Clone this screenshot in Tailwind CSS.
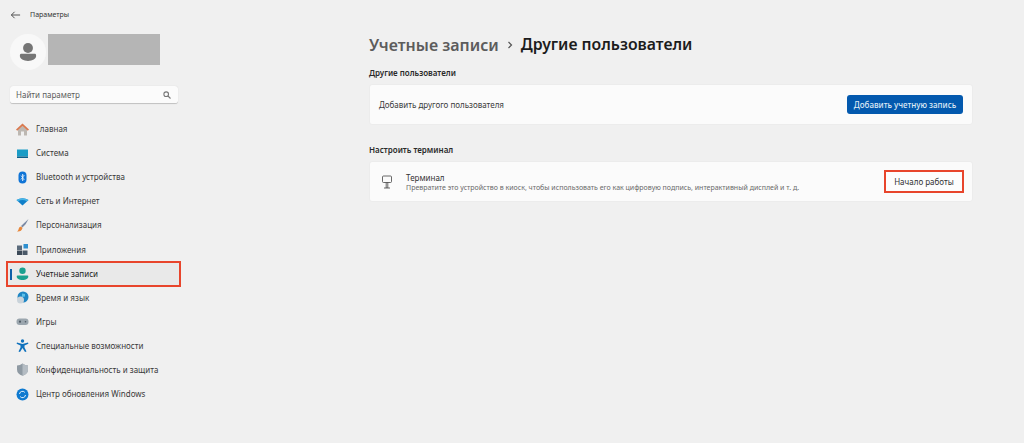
<!DOCTYPE html>
<html lang="ru">
<head>
  <meta charset="UTF-8">
  <title>Параметры</title>
  <script src="https://cdn.jsdelivr.net/npm/@tailwindcss/browser@4"></script>
</head>
<body class="bg-[#f0f0f0] text-[#1f1f1f] font-['Noto_Sans',sans-serif] h-[443px] w-[1024px] overflow-hidden">
  <div class="flex h-[443px]">
    <!-- Sidebar -->
    <aside class="w-[369px] shrink-0 pl-[7px] flex flex-col">
      <div class="flex items-center h-[30px] pl-[3px] gap-[9px]">
        <svg width="11" height="10" viewBox="0 0 12 10" fill="none" stroke="#444" stroke-width="1"><path d="M11 5H1.500M5 1.500 1.500 5 5 8.500"/></svg>
        <span class="text-[7px] text-[#333]">Параметры</span>
      </div>
      <div class="flex h-[37px] mt-[4px] pl-[3px]">
        <div class="w-[36px] h-[36px] rounded-full bg-[#f8f8f8] flex items-center justify-center shrink-0">
          <svg width="18" height="20" viewBox="0 0 20 22" fill="#757575"><circle cx="10" cy="6.500" r="5.500"/><path d="M1 14.500q0-1.500 1.500-1.500h15q1.500 0 1.500 1.500v1c0 3-4 5.500-9 5.500s-9-2.500-9-5.500z"/></svg>
        </div>
        <div class="w-[112px] h-[31px] bg-[#b5b5b5] ml-[2px]"></div>
      </div>
      <div class="mt-[15px] ml-[3px] w-[168px] h-[18px] bg-[#fbfbfb] rounded-[3px] border-b border-[#c4c4c4] shadow-[0_0_1px_#ccc] flex items-center justify-between pl-[6px] pr-[7px]">
        <span class="text-[8px] text-[#5c5c5c]">Найти параметр</span>
        <svg width="8" height="8" viewBox="0 0 8 8" fill="none" stroke="#777" stroke-width="1.100"><circle cx="3.200" cy="3.200" r="2.300"/><path d="m5 5 2.500 2.500"/></svg>
      </div>
      <nav class="mt-[13px] w-[173px] flex flex-col text-[8px] text-[#3a3a3a]">
        <a class="h-[24.100px] flex items-center pl-[9px] gap-[7px]">
          <svg class="w-[13px] h-[13px]" viewBox="0 0 13 13"><path d="M2 6.500 6.500 3 11 6.500V12.500H8V8.500H5V12.500H2z" fill="#bdb8b2"/><path d="M6.500.5 0 6.500l1.200 1.200 5.300-4.800 5.300 4.800L13 6.500z" fill="#d9794f"/></svg>
          <span>Главная</span>
        </a>
        <a class="h-[24.100px] flex items-center pl-[9px] gap-[7px]">
          <svg class="w-[13px] h-[13px]" viewBox="0 0 13 13"><rect x="1" y="2.500" width="11" height="7" fill="#1a9cc6"/><rect x="1" y="9.500" width="11" height="1.500" fill="#0b5f8a"/></svg>
          <span>Система</span>
        </a>
        <a class="h-[24.100px] flex items-center pl-[9px] gap-[7px]">
          <svg class="w-[13px] h-[13px]" viewBox="0 0 13 13"><rect x="2.500" y="0.500" width="8" height="12" rx="4" fill="#0f74d6"/><path d="M4.700 4.500 8.300 8 6.500 9.800V3.200L8.300 5 4.700 8.500" fill="none" stroke="#fff" stroke-width=".7"/></svg>
          <span>Bluetooth и устройства</span>
        </a>
        <a class="h-[24.100px] flex items-center pl-[9px] gap-[7px]">
          <svg class="w-[13px] h-[13px]" viewBox="0 0 13 13"><path d="M.5 5Q6.500 1.500 12.500 5L6.500 10.500z" fill="#0f7fc9"/><path d="M.5 5Q6.500 1.500 12.500 5L11 6.300Q6.500 3.800 2 6.300z" fill="#45b4e6"/></svg>
          <span>Сеть и Интернет</span>
        </a>
        <a class="h-[24.100px] flex items-center pl-[9px] gap-[7px]">
          <svg class="w-[13px] h-[13px]" viewBox="0 0 13 13"><path d="M12.500 0 5 7l1.500 1.500Q10.500 5 12.500 0" fill="#7b8ba5"/><path d="M5 7.500Q2.500 8 2.500 10.500 2 12 1 12.500 5.500 13 6.500 9z" fill="#e8873a"/></svg>
          <span>Персонализация</span>
        </a>
        <a class="h-[24.100px] flex items-center pl-[9px] gap-[7px]">
          <svg class="w-[13px] h-[13px]" viewBox="0 0 13 13"><rect x="1" y="2.500" width="5" height="4.500" fill="#5b6b7c"/><rect x="1" y="7.500" width="5" height="4.500" fill="#3c4a58"/><rect x="6.500" y="7.500" width="5" height="4.500" fill="#4a5968"/><rect x="7.500" y="1" width="4.500" height="4.500" fill="#2f90d0"/></svg>
          <span>Приложения</span>
        </a>
        <!-- выбранный пункт -->
        <a class="relative h-[24.100px] flex items-center pl-[9px] gap-[7px] bg-[#e9e9e9] text-[#222] outline-[2.500px] outline-[#e8452c] -outline-offset-1">
          <span class="absolute left-[3px] top-[7px] w-[1.500px] h-[11px] bg-[#0f5fa8]"></span>
          <svg class="w-[13px] h-[13px]" viewBox="0 0 13 13" fill="#1aa08f"><circle cx="6.500" cy="3.700" r="3.200"/><path d="M1.500 8.500h10q.8 0 .8 1C12.300 11.500 9.800 13 6.500 13S.7 11.500.7 9.500q0-1 .8-1z"/></svg>
          <span>Учетные записи</span>
        </a>
        <a class="h-[24.100px] flex items-center pl-[9px] gap-[7px]">
          <svg class="w-[13px] h-[13px]" viewBox="0 0 13 13"><circle cx="7" cy="6" r="5.500" fill="#1f86c4"/><circle cx="4.500" cy="9" r="3.500" fill="#c9d3da"/><path d="M6 2.500l3 .5 0 2.500-3 .5z" fill="#5cc0e8"/></svg>
          <span>Время и язык</span>
        </a>
        <a class="h-[24.100px] flex items-center pl-[9px] gap-[7px]">
          <svg class="w-[13px] h-[13px]" viewBox="0 0 13 13"><rect x=".5" y="3.500" width="12" height="6.500" rx="3" fill="#9ba6ae"/><circle cx="4" cy="6.700" r="1.100" fill="#4f5b64"/><circle cx="9.500" cy="6.700" r=".8" fill="#4f5b64"/></svg>
          <span>Игры</span>
        </a>
        <a class="h-[24.100px] flex items-center pl-[9px] gap-[7px]">
          <svg class="w-[13px] h-[13px]" viewBox="0 0 13 13" fill="#0f72bd"><circle cx="6.500" cy="2" r="1.700"/><path d="M1 3.500 6.500 5 12 3.500l.4 1.200L8.500 6.500v2l2 4-1.500.5-2.500-4-2.500 4-1.500-.5 2-4v-2L.6 4.700z"/></svg>
          <span>Специальные возможности</span>
        </a>
        <a class="h-[24.100px] flex items-center pl-[9px] gap-[7px]">
          <svg class="w-[13px] h-[13px]" viewBox="0 0 13 13"><path d="M6.500.5Q9 2.500 12 2.500V6.500Q12 11 6.500 12.800 1 11 1 6.500V2.500Q4 2.500 6.500.5" fill="#8f9aa3"/><path d="M6.500.5Q9 2.500 12 2.500V6.500Q12 11 6.500 12.800z" fill="#b4bcc3"/></svg>
          <span>Конфиденциальность и защита</span>
        </a>
        <a class="h-[24.100px] flex items-center pl-[9px] gap-[7px]">
          <svg class="w-[13px] h-[13px]" viewBox="0 0 13 13"><circle cx="6.500" cy="6.500" r="6" fill="#0f7ad0"/><path d="M3.500 6a3 3 0 0 1 5.300-1.600M9.500 7a3 3 0 0 1-5.300 1.600" fill="none" stroke="#fff" stroke-width=".9"/></svg>
          <span>Центр обновления Windows</span>
        </a>
      </nav>
    </aside>

    <!-- Main -->
    <main class="w-[604px] shrink-0 pt-[32px]">
      <h1 class="flex items-center h-[26px] text-[16px] font-semibold">
        <span class="text-[#5c5c5c]">Учетные записи</span>
        <svg class="ml-[8px] mr-[8px]" width="6" height="8" viewBox="0 0 6 8" fill="none" stroke="#555" stroke-width="1.200"><path d="m1.500 1 3 3-3 3"/></svg>
        <span class="text-[#1c1c1c] text-[15.800px]">Другие пользователи</span>
      </h1>
      <h2 class="mt-[8px] h-[14px] text-[8px] font-semibold text-[#2a2a2a] flex items-center">Другие пользователи</h2>
      <div class="mt-[4px] h-[41px] bg-[#fbfbfb] border border-[#ececec] rounded-[3px] flex items-center justify-between pl-[9px] pr-[9px]">
        <span class="text-[8px] text-[#3a3a3a]">Добавить другого пользователя</span>
        <button class="w-[116px] h-[19px] rounded-[3px] bg-[#0359ae] text-[#dfeaf5] text-[8px] font-medium">Добавить учетную запись</button>
      </div>
      <h2 class="mt-[18px] h-[14px] text-[8px] font-semibold text-[#2a2a2a] flex items-center">Настроить терминал</h2>
      <div class="mt-[4px] h-[41px] bg-[#fbfbfb] border border-[#ececec] rounded-[3px] flex items-center pl-[11px] pr-[8px]">
        <svg width="12" height="14" viewBox="0 0 12 14" fill="none" stroke="#444" stroke-width=".8"><rect x="1.500" y="1" width="9" height="6.500" rx="1"/><path d="M5.200 7.500V13M6.800 7.500V13M3 13h6"/></svg>
        <div class="ml-[13px] flex flex-col">
          <span class="text-[8px] leading-[11px] text-[#333]">Терминал</span>
          <span class="text-[7px] leading-[9px] text-[#6a6a6a]">Превратите это устройство в киоск, чтобы использовать его как цифровую подпись, интерактивный дисплей и т. д.</span>
        </div>
        <button class="ml-auto w-[80px] h-[23px] border-[2.500px] border-[#e8452c] bg-[#fdfdfd] text-[8px] text-[#333]">Начало работы</button>
      </div>
    </main>
  </div>
</body>
</html>
